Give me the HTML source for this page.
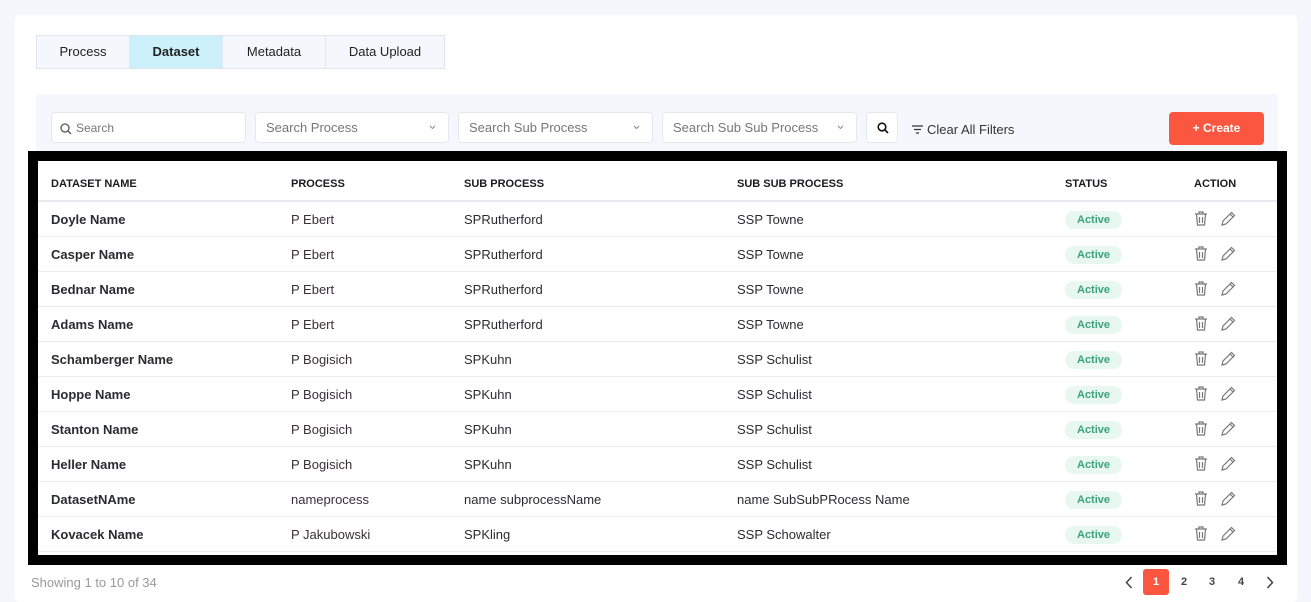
<!DOCTYPE html>
<html><head><meta charset="utf-8"><style>
*{box-sizing:border-box;margin:0;padding:0}
html,body{width:1311px;height:602px;overflow:hidden}
body{background:#f4f7fb;font-family:"Liberation Sans",sans-serif;font-size:13px;color:#2b2b33;position:relative}
.card{position:absolute;left:15px;top:15px;width:1282px;height:587px;background:#fff;border-radius:4px}
.tabs{position:absolute;left:36px;top:35px;height:34px;display:flex;border:1px solid #dfe5ee;background:#f4f7fb}
.tabs div{line-height:32px;font-size:13px;color:#222;border-right:1px solid #e3e8f0;text-align:center}
.tabs div:last-child{border-right:none}
.tabs .on{background:#cdf1fb;font-weight:bold}
.panel{position:absolute;left:36px;top:94px;width:1242px;height:70px;background:#f4f7fb;border-radius:4px}
.inp{position:absolute;top:112px;height:31px;background:#fff;border:1px solid #e4e8ef;border-radius:4px;color:#777;font-size:13px;line-height:30px;padding-left:10px}
.inp svg.c{position:absolute;right:12px;top:12px}
.create{position:absolute;left:1169px;top:112px;width:95px;height:33px;background:#fb5640;color:#fff;border-radius:4px;font-weight:bold;font-size:12px;text-align:center;line-height:33px}
.box{position:absolute;left:28px;top:151px;width:1259px;height:414px;border:10px solid #000;background:#fff}
table{border-collapse:collapse;width:100%}
th{height:40px;text-align:left;font-size:11px;font-weight:bold;color:#1a1a22;border-bottom:2px solid #e6e9ef;padding-top:7px}
td{height:35px;border-bottom:1px solid #e9ecf1;font-size:13px;padding-top:2px}
td:first-child{font-weight:bold}
td.p{color:#3a2f38}
.badge{display:inline-block;background:#e8f7f0;color:#3aa37a;font-weight:bold;font-size:11px;padding:0 12px;line-height:18px;border-radius:9px}
.pg{position:absolute;top:569px;font-size:11px;font-weight:bold;color:#444;line-height:26px;text-align:center;width:26px}
</style></head><body>
<div class="card"></div>
<div class="tabs"><div style="width:93px">Process</div><div class="on" style="width:93px">Dataset</div><div style="width:103px">Metadata</div><div style="width:118px">Data Upload</div></div>
<div class="panel"></div>
<div class="inp" style="left:51px;width:195px;padding-left:24px;font-size:12px"><svg style="position:absolute;left:8px;top:10px" width="12" height="12" viewBox="0 0 12 12"><circle cx="5" cy="5" r="4" fill="none" stroke="#555" stroke-width="1.3"/><path d="M8 8l3 3" stroke="#555" stroke-width="1.3"/></svg>Search</div>
<div class="inp" style="left:255px;width:194px">Search Process<svg class="c" width="7" height="5" viewBox="0 0 7 5"><path d="M1 1l2.5 2.5L6 1" fill="none" stroke="#888"/></svg></div>
<div class="inp" style="left:458px;width:195px">Search Sub Process<svg class="c" width="7" height="5" viewBox="0 0 7 5"><path d="M1 1l2.5 2.5L6 1" fill="none" stroke="#888"/></svg></div>
<div class="inp" style="left:662px;width:195px">Search Sub Sub Process<svg class="c" width="7" height="5" viewBox="0 0 7 5"><path d="M1 1l2.5 2.5L6 1" fill="none" stroke="#888"/></svg></div>
<div class="inp" style="left:866px;width:32px;padding:0"><svg style="position:absolute;left:10px;top:9px" width="12" height="12" viewBox="0 0 12 12"><circle cx="5" cy="5" r="3.8" fill="none" stroke="#111" stroke-width="1.6"/><path d="M8 8l3 3" stroke="#111" stroke-width="1.6"/></svg></div>
<div style="position:absolute;left:912px;top:122px;font-size:13px;color:#333"><svg width="11" height="9" viewBox="0 0 11 9" style="margin-right:4px"><path d="M0 1h11M2 4.5h7M4 8h3" stroke="#333" stroke-width="1.2"/></svg>Clear All Filters</div>
<div class="create">+ Create</div>
<div class="box"><table>
<colgroup><col style="width:253px"><col style="width:173px"><col style="width:273px"><col style="width:328px"><col style="width:129px"><col></colgroup>
<tr><th style="padding-left:13px">DATASET NAME</th><th>PROCESS</th><th>SUB PROCESS</th><th>SUB SUB PROCESS</th><th>STATUS</th><th>ACTION</th></tr>
<tbody id="b"></tbody></table></div>
<div style="position:absolute;left:31px;top:575px;color:#999;font-size:13px">Showing 1 to 10 of 34</div>
<svg style="position:absolute;left:1125px;top:576px" width="8" height="13" viewBox="0 0 8 13"><path d="M6.5 1L1.5 6.5l5 5.5" fill="none" stroke="#444" stroke-width="1.5"/></svg>
<div class="pg" style="left:1143px;background:#fb5640;color:#fff;border-radius:3px">1</div>
<div class="pg" style="left:1171px">2</div>
<div class="pg" style="left:1199px">3</div>
<div class="pg" style="left:1228px">4</div>
<svg style="position:absolute;left:1266px;top:576px" width="8" height="13" viewBox="0 0 8 13"><path d="M1.5 1l5 5.5-5 5.5" fill="none" stroke="#444" stroke-width="1.5"/></svg>
<script>
var r=[["Doyle Name","P Ebert","SPRutherford","SSP Towne"],["Casper Name","P Ebert","SPRutherford","SSP Towne"],["Bednar Name","P Ebert","SPRutherford","SSP Towne"],["Adams Name","P Ebert","SPRutherford","SSP Towne"],["Schamberger Name","P Bogisich","SPKuhn","SSP Schulist"],["Hoppe Name","P Bogisich","SPKuhn","SSP Schulist"],["Stanton Name","P Bogisich","SPKuhn","SSP Schulist"],["Heller Name","P Bogisich","SPKuhn","SSP Schulist"],["DatasetNAme","nameprocess","name subprocessName","name SubSubPRocess Name"],["Kovacek Name","P Jakubowski","SPKling","SSP Schowalter"]];
var ic='<svg width="14" height="15" viewBox="0 0 14 15" style="margin-left:0px"><path d="M1 3h12M5 3V1h4v2M2.5 3l1 11h7l1-11M5.5 6v6M8.5 6v6" fill="none" stroke="#777" stroke-width="1.2"/></svg><svg width="15" height="15" viewBox="0 0 15 15" style="margin-left:13px"><path d="M10.5 1.5l3 3-8.5 8.5-4 1 1-4zM9 3l3 3" fill="none" stroke="#777" stroke-width="1.2"/></svg>';
var h='';r.forEach(function(x){h+='<tr><td style="padding-left:13px">'+x[0]+'</td><td class="p">'+x[1]+'</td><td>'+x[2]+'</td><td>'+x[3]+'</td><td><span class="badge">Active</span></td><td>'+ic+'</td></tr>'});
document.getElementById('b').innerHTML=h;
</script>
</body></html>
